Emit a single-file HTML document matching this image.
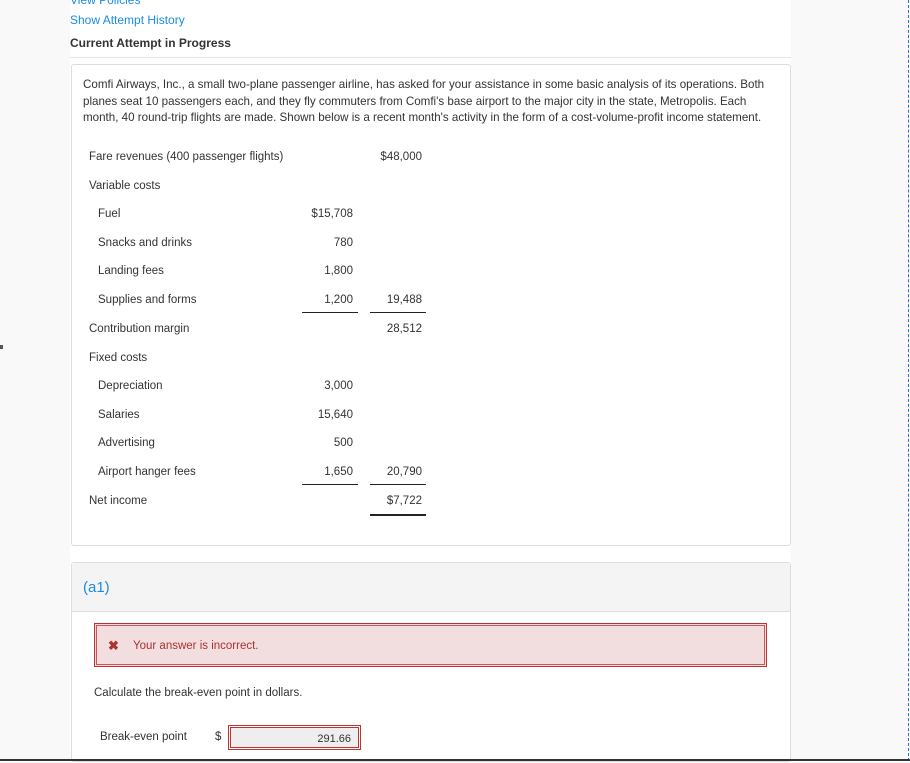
<!DOCTYPE html>
<html><head><style>
*{margin:0;padding:0;box-sizing:border-box}
body{width:910px;height:761px;background:#f9f9f9;font-family:"Liberation Sans",sans-serif;color:#333;position:relative;overflow:hidden;font-size:11.5px}
.main{position:absolute;left:70px;top:0;width:721px;height:761px;background:#fff}
.a{position:absolute;white-space:nowrap}
.card{position:absolute;left:71px;top:64px;width:720px;height:482px;border:1px solid #ddd;border-radius:3px;background:#fff}
.r{text-align:right}
.ul{position:absolute;height:1px;background:#222}
.t{position:absolute;left:0;top:2px;width:910px;height:761px}
</style></head><body>
<div class="main"></div>
<div class="a" style="left:70px;top:-7px;color:#1a8ce3;font-size:12px">View Policies</div>
<div class="a" style="left:70px;top:13px;color:#1a8ce3;font-size:12px">Show Attempt History</div>
<div class="a" style="left:70px;top:36px;color:#333;font-size:12px;font-weight:bold">Current Attempt in Progress</div>
<div style="position:absolute;left:70px;top:57px;width:721px;height:1px;background:#e5e5e5"></div>
<div class="card"></div>
<div class="a" style="left:83px;top:77px;line-height:16.5px;font-size:11.6px;letter-spacing:0px">Comfi Airways, Inc., a small two-plane passenger airline, has asked for your assistance in some basic analysis of its operations. Both<br>planes seat 10 passengers each, and they fly commuters from Comfi's base airport to the major city in the state, Metropolis. Each<br>month, 40 round-trip flights are made. Shown below is a recent month's activity in the form of a cost-volume-profit income statement.</div>
<div class="t">
<div class="a" style="left:89px;top:149px">Fare revenues (400 passenger flights)</div><div class="a r" style="left:360px;top:149px;width:62px">$48,000</div>
<div class="a" style="left:89px;top:178px">Variable costs</div>
<div class="a" style="left:98px;top:206px">Fuel</div><div class="a r" style="left:300px;top:206px;width:53px">$15,708</div>
<div class="a" style="left:98px;top:235px">Snacks and drinks</div><div class="a r" style="left:300px;top:235px;width:53px">780</div>
<div class="a" style="left:98px;top:263px">Landing fees</div><div class="a r" style="left:300px;top:263px;width:53px">1,800</div>
<div class="a" style="left:98px;top:292px">Supplies and forms</div><div class="a r" style="left:300px;top:292px;width:53px">1,200</div><div class="a r" style="left:360px;top:292px;width:62px">19,488</div>
<div class="a" style="left:89px;top:321px">Contribution margin</div><div class="a r" style="left:360px;top:321px;width:62px">28,512</div>
<div class="a" style="left:89px;top:350px">Fixed costs</div>
<div class="a" style="left:98px;top:378px">Depreciation</div><div class="a r" style="left:300px;top:378px;width:53px">3,000</div>
<div class="a" style="left:98px;top:407px">Salaries</div><div class="a r" style="left:300px;top:407px;width:53px">15,640</div>
<div class="a" style="left:98px;top:435px">Advertising</div><div class="a r" style="left:300px;top:435px;width:53px">500</div>
<div class="a" style="left:98px;top:464px">Airport hanger fees</div><div class="a r" style="left:300px;top:464px;width:53px">1,650</div><div class="a r" style="left:360px;top:464px;width:62px">20,790</div>
<div class="a" style="left:89px;top:493px">Net income</div><div class="a r" style="left:360px;top:493px;width:62px">$7,722</div>
</div>
<div class="ul" style="left:302px;top:312px;width:56px"></div><div class="ul" style="left:370px;top:312px;width:56px"></div>
<div class="ul" style="left:302px;top:484px;width:56px"></div><div class="ul" style="left:370px;top:484px;width:56px"></div>
<div class="ul" style="left:370px;top:514px;width:56px;height:2px"></div>
<div style="position:absolute;left:71px;top:562px;width:720px;height:200px;border:1px solid #ddd;border-radius:3px;background:#fff"></div>
<div style="position:absolute;left:72px;top:563px;width:718px;height:49px;background:#f4f4f4;border-bottom:1px solid #ddd"></div>
<div class="a" style="left:83px;top:579px;color:#1a8ce3;font-size:15px">(a1)</div>
<div style="position:absolute;left:94px;top:623px;width:673px;height:44px;border:1px solid #b33;background:#f2dede;box-shadow:inset 0 0 0 1px #f2dede,inset 0 0 0 2px #c55"></div>
<div class="a" style="left:108px;top:638px;color:#a33;font-size:13px;font-weight:bold">✖</div>
<div class="a" style="left:133px;top:640px;color:#a33">Your answer is incorrect.</div>
<div class="a" style="left:94px;top:687px">Calculate the break-even point in dollars.</div>
<div class="a" style="left:100px;top:731px">Break-even point</div>
<div class="a" style="left:215px;top:731px">$</div>
<div style="position:absolute;left:228px;top:725px;width:133px;height:25px;border:1px solid #b33;background:#eee;box-shadow:inset 0 0 0 1px #fff,inset 0 0 0 2px #b33"></div>
<div class="a r" style="left:230px;top:733px;width:121px;font-size:11px">291.66</div>
<div style="position:absolute;left:908px;top:0;height:761px;border-left:1px dashed #1a7ad9"></div>
<div style="position:absolute;left:0;top:759px;width:910px;height:2px;background:#333"></div>
<div class="a" style="left:0;top:345px;width:3px;height:4px;background:#555"></div>
</body></html>
